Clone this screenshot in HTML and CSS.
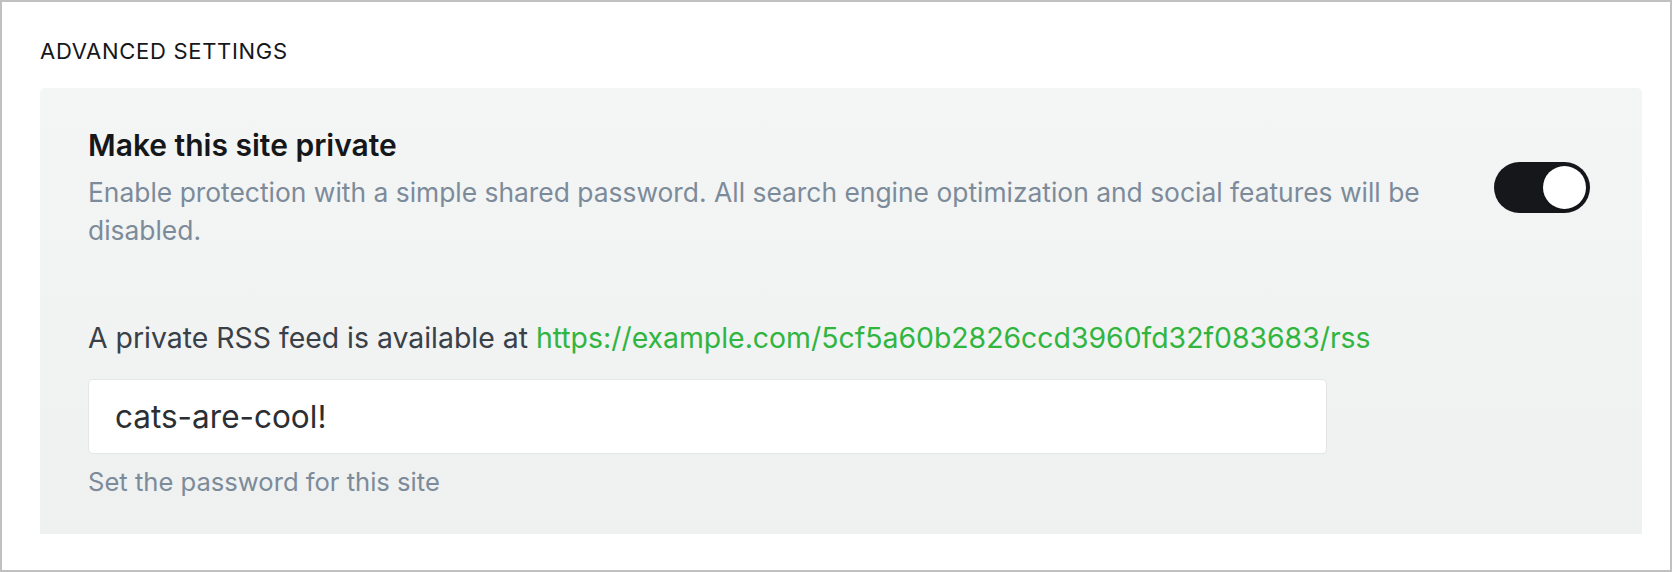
FILE: index.html
```html
<!DOCTYPE html>
<html>
<head>
<meta charset="utf-8">
<link rel="stylesheet" href="styles.css">
</head>
<body>
<div class="frame">
  <h2 class="section-title">Advanced settings</h2>
  <div class="panel">
    <div class="setting-row">
      <div class="setting-text">
        <h3 class="setting-title">Make this site private</h3>
        <p class="setting-desc">Enable protection with a simple shared password. All search engine optimization and social features will be disabled.</p>
      </div>
      <div class="toggle"><span class="knob"></span></div>
    </div>
    <p class="rss-line">A private RSS feed is available at <a class="rss-link" href="#">https://example.com/5cf5a60b2826ccd3960fd32f083683/rss</a></p>
    <div class="input">cats-are-cool!</div>
    <p class="help">Set the password for this site</p>
  </div>
</div>
</body>
</html>
```

FILE: styles.css
```css
* { box-sizing: border-box; }
html, body { margin: 0; padding: 0; background: #fff; }
body { font-family: Inter, "Noto Sans", sans-serif; color: #15171a; }
.frame {
  width: 1672px;
  height: 572px;
  border: 2px solid #c0c0c0;
  padding: 36px 28px 0 38px;
}
.section-title {
  margin: 0;
  font-size: 22px;
  font-weight: 400;
  text-transform: uppercase;
  letter-spacing: 0.7px;
  line-height: 26px;
  color: #15171a;
}
.panel {
  margin-top: 24px;
  background: linear-gradient(180deg, #f4f5f5 0%, #eff0f0 100%);
  border-radius: 5px 5px 0 0;
  padding: 37px 48px 34px 48px;
}
.setting-row {
  display: flex;
  align-items: center;
  justify-content: space-between;
}
.setting-text { width: 1380px; }
.setting-title {
  margin: 0;
  font-size: 30px;
  font-weight: 600;
  line-height: 40px;
  color: #15171a;
}
.setting-desc {
  margin: 8px 0 0 0;
  font-size: 26.4px;
  line-height: 38px;
  color: #7c8b9a;
}
.toggle {
  width: 96px;
  height: 51px;
  border-radius: 26px;
  background: #15171a;
  margin-right: 4px;
  display: flex;
  justify-content: flex-end;
  align-items: center;
  padding: 0 4px;
}
.knob {
  width: 43px;
  height: 43px;
  border-radius: 50%;
  background: #fff;
  box-shadow: 0 1px 3px rgba(0,0,0,0.25);
}
.rss-line {
  margin: 69px 0 0 0;
  font-size: 28.4px;
  line-height: 40px;
  color: #394047;
}
.rss-link { color: #30b53f; text-decoration: none; }
.input {
  margin-top: 21px;
  width: 1239px;
  height: 75px;
  background: #fff;
  border: 1px solid #e3e6e8;
  border-radius: 5px;
  padding: 0 26px;
  display: flex;
  align-items: center;
  font-size: 31.5px;
  color: #2b2f33;
}
.help {
  margin: 10px 0 0 0;
  font-size: 25.6px;
  line-height: 36px;
  color: #7c8b9a;
}
```
